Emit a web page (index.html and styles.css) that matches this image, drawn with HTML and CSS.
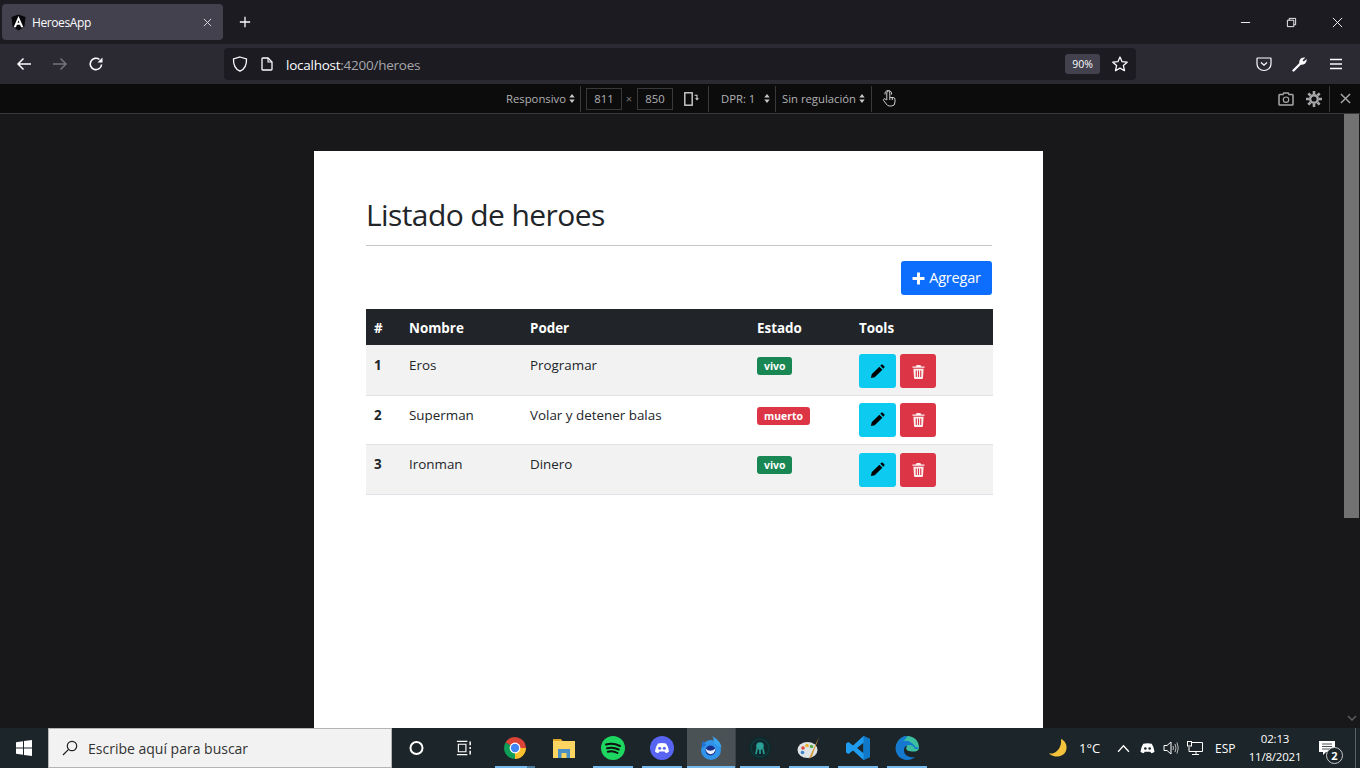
FILE: index.html
```html
<!DOCTYPE html>
<html lang="es">
<head>
<meta charset="utf-8">
<title>HeroesApp</title>
<link rel="stylesheet" href="styles.css">
</head>
<body>
<div class="screen">
  <header class="tabstrip">
    <div class="tab">
      <svg class="favicon" viewBox="0 0 16 17"><path d="M8 0 15.500 2.700 14.300 13 8 17 1.700 13 .5 2.700Z" fill="#08080c"/><path d="M8 1.500 2.800 13.500H5.300L6.300 10.800H9.700L10.700 13.500H13.200ZM7 8.800 8 6 9 8.800Z" fill="#fff" fill-rule="evenodd"/></svg>
      <span class="tab-title">HeroesApp</span>
      <svg class="tab-close" viewBox="0 0 10 10"><path d="M1 1 9 9M9 1 1 9" stroke="#d6d6da" stroke-width="1.100" fill="none"/></svg>
    </div>
    <svg class="newtab" viewBox="0 0 14 14"><path d="M7 1V13M1 7H13" stroke="#fbfbfe" stroke-width="1.500" fill="none"/></svg>
    <div class="winctl">
      <svg viewBox="0 0 12 12"><path d="M1 6H11" stroke="#fff" stroke-width="1" fill="none"/></svg>
      <svg viewBox="0 0 12 12"><path d="M1.500 3.500H8.500V10.500H1.500ZM3.500 3.500V1.500H10.500V8.500H8.500" stroke="#fff" stroke-width="1" fill="none"/></svg>
      <svg viewBox="0 0 12 12"><path d="M1 1 11 11M11 1 1 11" stroke="#fff" stroke-width="1" fill="none"/></svg>
    </div>
  </header>

  <nav class="toolbar">
    <svg class="tb-icon" viewBox="0 0 16 16"><path d="M15 8H2M7.500 2.500 2 8l5.500 5.500" stroke="#fbfbfe" stroke-width="1.500" fill="none"/></svg>
    <svg class="tb-icon dim" viewBox="0 0 16 16"><path d="M1 8H14M8.500 2.500 14 8l-5.500 5.500" stroke="#fbfbfe" stroke-width="1.500" fill="none"/></svg>
    <svg class="tb-icon" viewBox="0 0 16 16"><path d="M13.600 8.500A5.700 5.700 0 1 1 11.500 3.500" stroke="#fbfbfe" stroke-width="1.600" fill="none"/><path d="M14.500 1.500V6.500H9.500Z" fill="#fbfbfe"/></svg>
    <div class="urlbar">
      <svg class="shield" viewBox="0 0 16 16"><path d="M8 1 14.500 3C14.800 9 13 13 8 15.200 3 13 1.200 9 1.500 3Z" stroke="#fbfbfe" stroke-width="1.300" fill="none"/></svg>
      <svg class="docicon" viewBox="0 0 12 14"><path d="M1 1.800Q1 1 1.800 1H7L11 5V12.200Q11 13 10.200 13H1.800Q1 13 1 12.200Z" stroke="#fbfbfe" stroke-width="1.300" fill="none"/><path d="M7 1V5H11" stroke="#fbfbfe" stroke-width="1.100" fill="none"/></svg>
      <span class="url"><span class="url-host">localhost</span>:4200/heroes</span>
      <span class="zoomlevel">90%</span>
      <svg class="star" viewBox="0 0 16 16"><path d="M8 1 10.100 5.700 15.200 6.200 11.400 9.600 12.500 14.700 8 12.100 3.500 14.700 4.600 9.600 0.800 6.200 5.900 5.700Z" stroke="#fbfbfe" stroke-width="1.300" stroke-linejoin="round" fill="none"/></svg>
    </div>
    <div class="tb-right">
      <svg viewBox="0 0 16 16"><path d="M1.500 2H14.500Q15 2 15 2.500V8A7 6.500 0 0 1 1 8V2.500Q1 2 1.500 2Z" stroke="#fbfbfe" stroke-width="1.200" fill="none"/><path d="M5 6.500 8 9.200 11 6.500" stroke="#fbfbfe" stroke-width="1.300" fill="none"/></svg>
      <svg viewBox="0 0 16 16"><path d="M1.500 14.500 8 8" stroke="#fbfbfe" stroke-width="2.300" stroke-linecap="round"/><path d="M7.500 7.700C6.500 4 9.500 .8 13.200 1.700L10.600 4.200 11.800 5.500 14.500 3C15.300 6.500 12 9.500 8.500 8.400Z" fill="#fbfbfe"/></svg>
      <svg viewBox="0 0 16 16"><path d="M2 3.500H14M2 8H14M2 12.500H14" stroke="#fbfbfe" stroke-width="1.300" fill="none"/></svg>
    </div>
  </nav>

  <div class="rdmbar">
    <span class="rdm-item rdm-device">Responsivo<svg class="caret" viewBox="0 0 6 10"><path d="M3 0 6 4H0ZM3 10 0 6H6Z"/></svg></span>
    <span class="rdm-sep"></span>
    <span class="rdm-input">811</span>
    <span class="rdm-times">×</span>
    <span class="rdm-input">850</span>
    <svg class="rdm-rotate" viewBox="0 0 15 14"><rect x=".8" y=".8" width="7.400" height="12.400" stroke="#d0d0d2" stroke-width="1.400" fill="none"/><path d="M10.500 3.200H13V7" stroke="#d0d0d2" stroke-width="1.100" fill="none"/><path d="M11 6.300H15L13 8.500Z" fill="#d0d0d2"/></svg>
    <span class="rdm-sep"></span>
    <span class="rdm-item rdm-dpr">DPR: 1<svg class="caret" viewBox="0 0 6 10"><path d="M3 0 6 4H0ZM3 10 0 6H6Z"/></svg></span>
    <span class="rdm-sep"></span>
    <span class="rdm-item rdm-net">Sin regulación<svg class="caret" viewBox="0 0 6 10"><path d="M3 0 6 4H0ZM3 10 0 6H6Z"/></svg></span>
    <span class="rdm-sep"></span>
    <svg class="rdm-hand" viewBox="0 0 14 17"><path d="M4.800 10V3Q4.800 1 6.300 1T7.800 3V7.500H11Q13 7.500 13 9.500V12Q13 16 9.500 16H7.500Q5.500 16 4.300 14L1.600 10.500Q1 9.300 2 8.800T3.800 9.500ZM7.800 7.500V10M10.300 7.500V10M3 4.500Q2.500 1 6.300 .4 10 1 9.600 4.500" stroke="#d0d0d2" stroke-width="1" fill="none"/></svg>
    <div class="rdm-right">
      <svg class="rdm-cam" viewBox="0 0 16 14"><path d="M1.800 2.500H5L5.800 1H10.200L11 2.500H14.200Q15 2.500 15 3.300V12.200Q15 13 14.200 13H1.800Q1 13 1 12.200V3.300Q1 2.500 1.800 2.500Z" stroke="#a8a8aa" stroke-width="1.500" fill="none"/><circle cx="8" cy="7.700" r="2.700" stroke="#a8a8aa" stroke-width="1.200" fill="none"/></svg>
      <svg class="rdm-gear" viewBox="0 0 16 16"><circle cx="8" cy="8" r="3.800" stroke="#a8a8aa" stroke-width="2.400" fill="none"/><path d="M8 0V3M8 13V16M0 8H3M13 8H16M2.300 2.300 4.500 4.500M11.500 11.500 13.700 13.700M13.700 2.300 11.500 4.500M4.500 11.500 2.300 13.700" stroke="#a8a8aa" stroke-width="2.600"/></svg>
      <span class="rdm-sep rdm-sep-b"></span>
      <svg class="rdm-x" viewBox="0 0 12 12"><path d="M1 1 11 11M11 1 1 11" stroke="#a8a8aa" stroke-width="1.500" fill="none"/></svg>
    </div>
  </div>

  <div class="viewport">
    <main class="page">
      <h1 class="title">Listado de heroes</h1>
      <hr class="rule">
      <div class="actions">
        <button class="btn btn-add"><svg class="plus" viewBox="0 0 12 12"><path d="M6 .5V11.500M.5 6H11.500" stroke="#fff" stroke-width="2.700" fill="none"/></svg><span>Agregar</span></button>
      </div>
      <table class="heroes">
        <thead>
          <tr><th class="c-num">#</th><th class="c-name">Nombre</th><th class="c-power">Poder</th><th class="c-state">Estado</th><th>Tools</th></tr>
        </thead>
        <tbody>
          <tr class="odd">
            <th>1</th><td>Eros</td><td>Programar</td><td><span class="badge ok">vivo</span></td>
            <td class="tools"><button class="btn btn-edit"><svg viewBox="0 0 16 16"><path d="M1 15 1.800 11 10 2.800 13.200 6 5 14.200ZM11 1.800 12 .8Q12.800 0 13.600 .8L15.200 2.400Q16 3.200 15.200 4L14.200 5Z" fill="#000"/></svg></button><button class="btn btn-del"><svg viewBox="0 0 14 16"><path d="M5 1H9L10 2.500H13.500V4H.5V2.500H4ZM1.500 5H12.500L11.800 15Q11.700 16 10.800 16H3.200Q2.300 16 2.200 15ZM4 7V14H5.200V7ZM6.400 7V14H7.600V7ZM8.800 7V14H10V7Z" fill="#fff" fill-rule="evenodd" opacity=".92"/></svg></button></td>
          </tr>
          <tr>
            <th>2</th><td>Superman</td><td>Volar y detener balas</td><td><span class="badge bad">muerto</span></td>
            <td class="tools"><button class="btn btn-edit"><svg viewBox="0 0 16 16"><path d="M1 15 1.800 11 10 2.800 13.200 6 5 14.200ZM11 1.800 12 .8Q12.800 0 13.600 .8L15.200 2.400Q16 3.200 15.200 4L14.200 5Z" fill="#000"/></svg></button><button class="btn btn-del"><svg viewBox="0 0 14 16"><path d="M5 1H9L10 2.500H13.500V4H.5V2.500H4ZM1.500 5H12.500L11.800 15Q11.700 16 10.800 16H3.200Q2.300 16 2.200 15ZM4 7V14H5.200V7ZM6.400 7V14H7.600V7ZM8.800 7V14H10V7Z" fill="#fff" fill-rule="evenodd" opacity=".92"/></svg></button></td>
          </tr>
          <tr class="odd">
            <th>3</th><td>Ironman</td><td>Dinero</td><td><span class="badge ok">vivo</span></td>
            <td class="tools"><button class="btn btn-edit"><svg viewBox="0 0 16 16"><path d="M1 15 1.800 11 10 2.800 13.200 6 5 14.200ZM11 1.800 12 .8Q12.800 0 13.600 .8L15.200 2.400Q16 3.200 15.200 4L14.200 5Z" fill="#000"/></svg></button><button class="btn btn-del"><svg viewBox="0 0 14 16"><path d="M5 1H9L10 2.500H13.500V4H.5V2.500H4ZM1.500 5H12.500L11.800 15Q11.700 16 10.800 16H3.200Q2.300 16 2.200 15ZM4 7V14H5.200V7ZM6.400 7V14H7.600V7ZM8.800 7V14H10V7Z" fill="#fff" fill-rule="evenodd" opacity=".92"/></svg></button></td>
          </tr>
        </tbody>
      </table>
    </main>
    <div class="scrollbar">
      <div class="thumb"></div>
      <svg class="scroll-down" viewBox="0 0 10 6"><path d="M1 1 5 5 9 1" stroke="#5c5c5e" stroke-width="1.500" fill="none"/></svg>
    </div>
  </div>

  <footer class="taskbar">
    <svg class="start" viewBox="0 0 16 16"><path d="M0 2.300 7 1.300V7.600H0ZM8 1.100 16 0V7.600H8ZM0 8.400H7V14.700L0 13.700ZM8 8.400H16V16L8 14.900Z" fill="#fff"/></svg>
    <div class="search">
      <svg viewBox="0 0 16 16"><circle cx="10" cy="6" r="4.700" stroke="#222" stroke-width="1.200" fill="none"/><path d="M6.600 9.400 1 15" stroke="#222" stroke-width="1.200"/></svg>
      <span>Escribe aquí para buscar</span>
    </div>
    <div class="task-sys">
      <svg viewBox="0 0 16 16"><circle cx="8" cy="8" r="6" stroke="#fff" stroke-width="2" fill="none"/></svg>
    </div>
    <div class="task-sys">
      <svg viewBox="0 0 18 16"><path d="M1 1H12M1 15H12M2.500 4H10.500V12H2.500Z" stroke="#fff" stroke-width="1.200" fill="none"/><path d="M15 1V5M15 7V9M15 11V15" stroke="#fff" stroke-width="1.600"/></svg>
    </div>
    <div class="apps">
      <div class="app run stacked">
        <svg viewBox="0 0 24 24"><path d="M12 12 2.500 6.500A11 11 0 0 1 23 12H12Z" fill="#db4437"/><path d="M12 12 12 23A11 11 0 0 0 23 12Z" fill="#fbc02d"/><path d="M12 12 12 23A11 11 0 0 1 2.500 6.500Z" fill="#0f9d58"/><circle cx="12" cy="12" r="5.400" fill="#fff"/><circle cx="12" cy="12" r="4.200" fill="#4285f4"/></svg>
      </div>
      <div class="app">
        <svg viewBox="0 0 24 24"><path d="M1 3H9L11 5.500H1Z" fill="#e0a526"/><rect x="1" y="5" width="22" height="17" fill="#fcd462"/><rect x="6" y="13" width="12" height="9" fill="#4a90c4"/><rect x="9.500" y="17" width="5" height="5" fill="#fcd462"/></svg>
      </div>
      <div class="app run">
        <svg viewBox="0 0 24 24"><circle cx="12" cy="12" r="12" fill="#1ed760"/><path d="M5 8.500Q12 6.500 19 10M6 12.300Q12 10.700 17.700 13.500M6.800 15.800Q12 14.500 16.500 17" stroke="#111" stroke-width="2" stroke-linecap="round" fill="none"/></svg>
      </div>
      <div class="app run">
        <svg viewBox="0 0 24 24"><circle cx="12" cy="12" r="12" fill="#5865f2"/><path d="M8 7.500Q12 6.500 16 7.500 18.500 10.500 19 15.500 17.500 17 15.500 17L14.700 15.500H9.300L8.500 17Q6.500 17 5 15.500 5.500 10.500 8 7.500Z" fill="#fff"/><circle cx="9.700" cy="12.300" r="1.500" fill="#5865f2"/><circle cx="14.300" cy="12.300" r="1.500" fill="#5865f2"/></svg>
      </div>
      <div class="app run active">
        <svg viewBox="0 0 24 24"><circle cx="12" cy="14" r="10" fill="#2f94ea"/><path d="M13 0C18 3 22 6 22.500 12L15 7C15 4 14.500 2 13 0Z" fill="#38a6f2"/><path d="M3 5 7.500 9 3 12Z" fill="#1f74d6"/><circle cx="11.500" cy="14.500" r="5" fill="#1a2f8a"/><path d="M6.500 12.500Q11 17 16.500 12.500 15.500 19 10.500 18 7.500 17 6.500 12.500Z" fill="#e8f2ff"/></svg>
      </div>
      <div class="app-sep"></div>
      <div class="app run">
        <svg viewBox="0 0 24 24"><circle cx="12" cy="12" r="11.500" fill="#10282b"/><circle cx="12" cy="12" r="9" fill="none" stroke="#0f3a3c" stroke-width="1.500"/><circle cx="12" cy="10" r="3.800" fill="#2aa198"/><path d="M9 12.500 8 18M15 12.500 16 18M12 13V18" stroke="#2aa198" stroke-width="1.600"/></svg>
      </div>
      <div class="app run">
        <svg viewBox="0 0 24 24"><ellipse cx="10.500" cy="14" rx="10" ry="8" fill="#dfe4e6"/><circle cx="6" cy="12" r="1.800" fill="#d84a3a"/><circle cx="10" cy="9.500" r="1.800" fill="#e8b52e"/><circle cx="14.500" cy="10.500" r="1.800" fill="#5caa4a"/><circle cx="5.500" cy="16.500" r="1.800" fill="#3d85c6"/><path d="M22 1 13 20 11.500 23 15 20.500Z" fill="#d69a3a"/></svg>
      </div>
      <div class="app run">
        <svg viewBox="0 0 24 24"><path d="M17.500 0 24 3V21L17.500 24 7 14.500 2.500 18 0 16.500V7.500L2.500 6 7 9.500ZM17.500 6.800 11 12 17.500 17.200Z" fill="#1f9cf0" fill-rule="evenodd"/><path d="M17.500 0 24 3V21L17.500 24Z" fill="#0f78c8"/></svg>
      </div>
      <div class="app run">
        <svg viewBox="0 0 24 24"><path d="M1 11C2 4 7 0 12.500 0 19 0 24 5 24 11.500 24 15 20.500 16 17 15.500 12 15 10 14 12 10 8 9 4 11 1 11Z" fill="#3dbf9f"/><path d="M12.500 0C6.500 0 1.500 4.500.5 12 .5 19 6 24 12 24 15 24 18 23 20 21 15 22 9.500 20 9 15 8.700 12 10 10 13 9 16 8.500 19 10 20 13 22 13 24 13 24 11 22 13 20 10 18 8 15 5 12 4 8 5 11 3 12 1 12.500 0Z" fill="#1479cf"/></svg>
      </div>
    </div>
    <div class="tray">
      <svg class="moon" viewBox="0 0 18 18"><path d="M12 0C17 2 19 8 16.500 13 13.500 18 6 19.500 0 14.500 7 15.500 13 9 12 0Z" fill="#f5c33b"/></svg>
      <span class="temp">1°C</span>
      <svg class="chevron" viewBox="0 0 12 8"><path d="M1 7 6 1.500 11 7" stroke="#fff" stroke-width="1.200" fill="none"/></svg>
      <svg class="tray-discord" viewBox="0 0 16 12"><path d="M3.500 1.500Q8 .3 12.500 1.500 15 5 15.500 10 14 11.500 12 11.500L11 10H5L4 11.500Q2 11.500 .5 10 1 5 3.500 1.500Z" fill="#fff"/><circle cx="5.700" cy="6.500" r="1.400" fill="#1c2529"/><circle cx="10.300" cy="6.500" r="1.400" fill="#1c2529"/></svg>
      <svg class="tray-i" viewBox="0 0 16 16"><path d="M1 5.500H4L8 2V14L4 10.500H1Z" stroke="#fff" fill="none"/><path d="M10 6Q11 8 10 10M12 4Q14 8 12 12M14 2.500Q16.500 8 14 13.500" stroke="#bbb" fill="none"/></svg>
      <svg class="tray-i" viewBox="0 0 16 16"><path d="M4 2.500H15.500V11.500H2V7M9 11.500V14.500M5 14.500H12" stroke="#fff" fill="none"/><rect x=".5" y="1.500" width="4" height="4.500" fill="#1c2529" stroke="#fff"/></svg>
      <span class="lang">ESP</span>
      <div class="clock"><span>02:13</span><span>11/8/2021</span></div>
      <div class="notif">
        <svg viewBox="0 0 16 14"><path d="M0 0H16V11H7L4 14V11H0Z" fill="#fff"/><path d="M3 3H13M3 5.500H13M3 8H13" stroke="#1c2529" stroke-width=".8"/></svg>
        <span class="notif-count">2</span>
      </div>
      <span class="desktop-line"></span>
    </div>
  </footer>
</div>
</body>
</html>
```

FILE: styles.css
```css
* { box-sizing: border-box; }
html, body { margin: 0; height: 100%; overflow: hidden; }
body { font-family: "Open Sans", "Noto Sans", "Liberation Sans", sans-serif; }
svg { display: block; flex: none; }
.screen { width: 1360px; height: 768px; display: grid; grid-template-rows: 44px 40px 30px 1fr 40px; }

/* tab strip */
.tabstrip { background: #1c1b22; display: flex; align-items: center; padding-left: 2px; }
.tab { width: 221px; height: 36px; background: #42414d; border-radius: 4px; display: flex; align-items: center; padding: 0 11px 0 9px; color: #fbfbfe; }
.favicon { width: 15px; height: 17px; }
.tab-title { margin-left: 6px; font-size: 12px; letter-spacing: -.4px; flex: 1; }
.tab-close { width: 9px; height: 9px; }
.newtab { width: 12px; height: 12px; margin-left: 16px; }
.winctl { margin-left: auto; display: flex; gap: 35px; padding-right: 17px; }
.winctl svg { width: 11px; height: 11px; }

/* toolbar */
.toolbar { background: #2b2a33; display: flex; align-items: center; padding-left: 16px; }
.tb-icon { width: 16px; height: 16px; margin-right: 20px; }
.tb-icon.dim { opacity: .35; }
.urlbar { width: 912px; height: 32px; margin-left: 100px; background: #1c1b22; border-radius: 4px; display: flex; align-items: center; padding: 0 8px; }
.shield { width: 16px; height: 16px; }
.docicon { width: 12px; height: 14px; margin-left: 13px; }
.url { margin-left: 13px; padding-top: 2px; font-size: 13.500px; letter-spacing: -.25px; color: #a6a6ab; flex: 1; }
.url-host { color: #fbfbfe; }
.zoomlevel { width: 35px; height: 20px; background: #42414d; border-radius: 3px; font-size: 10.500px; color: #fbfbfe; display: flex; align-items: center; justify-content: center; }
.star { width: 16px; height: 16px; margin-left: 12px; }
.tb-right { display: flex; margin-left: 120px; gap: 20px; }
.tb-right svg { width: 16px; height: 16px; }

/* responsive mode bar */
.rdmbar { background: #0c0c0d; border-bottom: 1px solid #38383d; display: flex; align-items: center; color: #b1b1b3; font-size: 11.300px; padding-left: 506px; }
.rdm-item { display: flex; align-items: center; white-space: nowrap; }
.caret { width: 6px; height: 9px; fill: #c8c8ca; }
.rdm-device { width: 74px; gap: 3px; }
.rdm-sep { width: 1px; height: 26px; background: #38383d; flex: none; }
.rdm-input { width: 36px; height: 22px; margin-left: 5px; border: 1px solid #38383d; display: flex; align-items: center; justify-content: center; }
.rdm-times { width: 10px; margin-left: 2px; margin-right: -2px; text-align: center; color: #77777a; }
.rdm-rotate { width: 15px; height: 14px; margin-left: 11px; margin-right: 9px; }
.rdm-dpr { width: 66px; padding-left: 12px; justify-content: space-between; padding-right: 5px; }
.rdm-net { width: 95px; padding-left: 6px; gap: 3px; }
.rdm-hand { width: 14px; height: 17px; margin-left: 10px; }
.rdm-right { margin-left: auto; display: flex; align-items: center; }
.rdm-cam { width: 16px; height: 14px; margin-right: 12px; }
.rdm-gear { width: 16px; height: 16px; margin-right: 7px; }
.rdm-sep-b { margin-right: 10px; }
.rdm-x { width: 11px; height: 11px; margin-right: 9px; }

/* page viewport */
.viewport { background: #18181a; display: flex; overflow: hidden; min-height: 0; }
.page { width: 729px; height: 100%; margin: 37px 0 0 314px; flex: none; background: #fff; padding: 0 51px 0 52px; color: #212529; font-size: 13.400px; }
.title { margin: 0; padding-top: 42px; font-size: 30px; line-height: 44px; font-weight: 400; letter-spacing: -.6px; height: 94px; }
.rule { margin: 0; border: 0; height: 1px; background: #c8c8c8; }
.actions { display: flex; justify-content: flex-end; margin-top: 15px; }
.btn { border: 0; padding: 0; border-radius: 3px; display: flex; align-items: center; justify-content: center; font: inherit; }
.btn-add { width: 91px; height: 34px; background: #0d6efd; color: #fff; font-size: 14.500px; letter-spacing: -.2px; gap: 4px; }
.btn-add span { margin-top: -2px; }
.plus { width: 13px; height: 13px; }
.heroes { width: 627px; margin-top: 14px; border-collapse: collapse; table-layout: fixed; }
.heroes thead tr { background: #212529; color: #fff; height: 36px; }
.heroes th, .heroes td { padding: 0 8px; text-align: left; }
.heroes thead th { font-weight: 700; vertical-align: middle; padding-top: 2px; }
.heroes tbody tr { border-bottom: 1px solid #dee2e6; }
.heroes tbody tr:nth-child(1) { height: 50px; }
.heroes tbody tr:nth-child(2) { height: 49px; }
.heroes tbody tr:nth-child(3) { height: 50px; }
.heroes tbody th, .heroes tbody td { vertical-align: top; padding-top: 10px; color: #212529; }
.heroes tbody tr:nth-child(1) th, .heroes tbody tr:nth-child(1) td { padding-top: 11px; }
.heroes tbody tr:nth-child(1) .tools { padding-top: 9px; }
.heroes tbody tr:nth-child(2) .tools { padding-top: 7px; }
.heroes tbody tr:nth-child(3) .tools { padding-top: 8px; }
.odd { background: #f2f2f2; }
.c-num { width: 35px; }
.c-name { width: 121px; }
.c-power { width: 227px; }
.c-state { width: 102px; }
.badge { display: inline-block; height: 18px; padding: 0 7px; border-radius: 3px; color: #fff; font-size: 10.400px; font-weight: 700; line-height: 18px; margin-top: 1px; }
.ok { background: #198754; }
.bad { background: #dc3545; margin-top: -1px; }
.tools { white-space: nowrap; }
.tools .btn { display: inline-flex; height: 34px; vertical-align: top; }
.btn-edit { width: 37px; background: #0dcaf0; margin-right: 4px; }
.btn-edit svg { width: 15px; height: 15px; }
.btn-del { width: 36px; background: #dc3545; }
.btn-del svg { width: 13px; height: 15px; }

/* scrollbar */
.scrollbar { margin-left: auto; width: 16px; display: flex; flex-direction: column; }
.thumb { width: 15px; height: 404px; background: #727272; }
.scroll-down { width: 10px; height: 6px; margin: auto 0 7px 3px; }

/* taskbar */
.taskbar { background: #1c2529; display: flex; align-items: center; color: #fff; }
.start { width: 16px; height: 16px; margin: 0 16px; }
.search { width: 344px; height: 40px; background: #f2f2f2; border: 1px solid #b4b4b4; display: flex; align-items: center; color: #333; font-size: 14px; padding-left: 13px; }
.search svg { width: 16px; height: 16px; }
.search span { margin-left: 10px; }
.task-sys { width: 48px; display: flex; justify-content: center; }
.task-sys svg { width: 17px; height: 16px; }
.apps { display: flex; height: 40px; margin-left: 3px; }
.app { width: 49px; height: 40px; display: flex; align-items: center; justify-content: center; position: relative; }
.app svg { width: 24px; height: 24px; margin-right: 1px; }
.app.run::after { content: ""; position: absolute; left: 4px; right: 5px; bottom: 0; height: 2px; background: #76b9ed; }
.app.stacked::after { background: linear-gradient(90deg, #76b9ed 80%, #4a7a9c 80%); }
.app.active { background: #4a5256; width: 48px; }
.app.active svg { margin-right: 0; }
.app.active::after { left: 0; right: 0; }
.app-sep { width: 1px; background: #3a4347; }
.tray { margin-left: auto; display: flex; align-items: center; height: 40px; font-size: 12px; }
.moon { width: 18px; height: 18px; }
.temp { margin-left: 12px; font-size: 13px; width: 38px; }
.chevron { height: 9px; width: 13px; margin-right: 10px; }
.tray-discord { width: 15px; height: 12px; margin-right: 8px; }
.tray-i { width: 16px; height: 16px; margin-right: 8px; }
.lang { margin-left: 4px; width: 32px; }
.clock { width: 56px; display: flex; flex-direction: column; align-items: center; line-height: 18px; font-size: 11.500px; letter-spacing: -.2px; }
.notif { position: relative; width: 31px; margin-left: 16px; }
.notif svg { width: 16px; height: 14px; }
.notif-count { position: absolute; left: 7px; top: 6px; width: 17px; height: 17px; border: 1px solid #ccc; border-radius: 50%; background: #1c2529; font-size: 11px; font-weight: 700; display: flex; align-items: center; justify-content: center; }
.desktop-line { width: 1px; height: 40px; background: #5a6468; margin: 0 4px 0 5px; }
```
